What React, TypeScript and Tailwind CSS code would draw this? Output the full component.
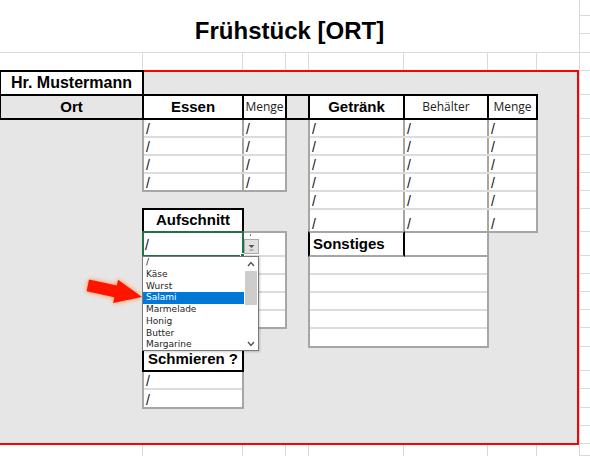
import React from 'react';

// row heights of the sheet, top to bottom (used for the gridline column on the right)
const rowH = [
  'h-[16px]', 'h-[18px]', 'h-[19px]', 'h-[18px]', 'h-[24px]', 'h-[24px]', 'h-[18px]', 'h-[18px]',
  'h-[18px]', 'h-[18px]', 'h-[18px]', 'h-[23px]', 'h-[24px]', 'h-[18px]', 'h-[18px]', 'h-[18px]',
  'h-[18px]', 'h-[19px]', 'h-[24px]', 'h-[18px]', 'h-[19px]', 'h-[18px]', 'h-[18px]', 'h-[12px]',
];
const colW = ['w-[143px]', 'w-[100px]', 'w-[43px]', 'w-[23px]', 'w-[95px]', 'w-[84px]', 'w-[49px]', 'w-[42px]'];

const items = ['/', 'Käse', 'Wurst', 'Salami', 'Marmelade', 'Honig', 'Butter', 'Margarine'];

const arrow = '89,279.5 116.8,285.5 118.1,279.7 142,297 113.1,303.1 114.4,297.3 86.6,291.2';

function GridStrip({ className }: { className: string }) {
  return (
    <div className={`${className} flex`}>
      {colW.map((w, i) => (
        <div key={i} className={`${w} shrink-0 border-r border-[#dadada] last:border-r-0`} />
      ))}
    </div>
  );
}

function DataGrid({
  area,
  rows,
  cols,
  filled,
}: {
  area: string;
  rows: string[];
  cols: string[];
  filled: boolean[];
}) {
  return (
    <div className={`${area} -m-px flex flex-col divide-y-2 divide-[#dcdcdc] border-2 border-[#a6a6a6] bg-white`}>
      {rows.map((h, r) => (
        <div key={r} className={`${h} flex shrink-0 divide-x-2 divide-[#a6a6a6]`}>
          {cols.map((w, c) => (
            <div key={c} className={`${w} flex shrink-0 items-end pl-[2px] text-[14px] leading-[14px] text-[#111]`}>
              {filled[c] ? '/' : ''}
            </div>
          ))}
        </div>
      ))}
    </div>
  );
}

export default function App() {
  return (
    <div className="relative h-[456px] w-[590px] overflow-hidden bg-white font-['Liberation_Sans',Arial,sans-serif] text-black">
      <div className="grid h-full w-full grid-cols-[143px_100px_43px_23px_95px_84px_49px_42px_11px] grid-rows-[16px_18px_19px_18px_24px_24px_18px_18px_18px_18px_18px_23px_24px_18px_18px_18px_18px_19px_24px_18px_19px_18px_18px_12px]">
        {/* title (merged cell) */}
        <div className="col-start-1 col-end-9 row-start-1 row-end-4 flex items-center justify-center border-b border-[#dadada] pt-[9px] text-[24px] font-bold">
          Frühstück [ORT]
        </div>

        {/* plain sheet gridlines */}
        <GridStrip className="col-start-1 col-end-9 row-start-4" />
        <GridStrip className="col-start-1 col-end-9 row-start-24" />
        <div className="col-start-9 row-start-1 row-end-25 flex flex-col border-l border-[#dadada]">
          {rowH.map((h, i) => (
            <div key={i} className={`${h} shrink-0 border-b border-[#dadada]`} />
          ))}
        </div>

        {/* grey print area with red frame */}
        <div className="col-start-1 col-end-9 row-start-5 row-end-24 -mt-px -mb-px border-t-2 border-r-2 border-b-2 border-[#ff0000] bg-[#e7e6e6]" />

        <div className="col-start-1 row-start-5 -m-px flex items-center justify-center border-2 border-black bg-white text-[16px] font-bold">
          Hr. Mustermann
        </div>

        {/* data blocks */}
        <DataGrid
          area="col-start-2 col-end-4 row-start-7 row-end-11"
          rows={['h-[18px]', 'h-[18px]', 'h-[18px]', 'h-[16px]']}
          cols={['w-[100px]', 'flex-1']}
          filled={[true, true]}
        />
        <DataGrid
          area="col-start-5 col-end-8 row-start-7 row-end-13"
          rows={['h-[18px]', 'h-[18px]', 'h-[18px]', 'h-[18px]', 'h-[18px]', 'h-[21px]']}
          cols={['w-[95px]', 'w-[84px]', 'flex-1']}
          filled={[true, true, true]}
        />
        <DataGrid
          area="col-start-2 col-end-4 row-start-13 row-end-18"
          rows={['h-[24px]', 'h-[18px]', 'h-[18px]', 'h-[18px]', 'h-[16px]']}
          cols={['w-[100px]', 'flex-1']}
          filled={[false, false]}
        />
        <DataGrid
          area="col-start-5 col-end-7 row-start-14 row-end-19"
          rows={['h-[18px]', 'h-[18px]', 'h-[18px]', 'h-[18px]', 'h-[17px]']}
          cols={['flex-1']}
          filled={[false]}
        />
        <DataGrid
          area="col-start-2 row-start-20 row-end-22"
          rows={['h-[18px]', 'h-[17px]']}
          cols={['flex-1']}
          filled={[true]}
        />

        {/* header row */}
        <div className="col-start-1 col-end-8 row-start-6 -m-px flex divide-x-2 divide-black border-2 border-black text-[15px] font-bold">
          <div className="flex w-[143px] shrink-0 items-center justify-center bg-[#e7e6e6]">Ort</div>
          <div className="flex w-[100px] shrink-0 items-center justify-center bg-white">Essen</div>
          <div className="flex w-[43px] shrink-0 items-center justify-center bg-white font-['Open_Sans',sans-serif] text-[12px] font-normal text-[#222]">
            Menge
          </div>
          <div className="w-[23px] shrink-0 bg-[#e7e6e6]" />
          <div className="flex w-[95px] shrink-0 items-center justify-center bg-white">Getränk</div>
          <div className="flex w-[84px] shrink-0 items-center justify-center bg-white font-['Open_Sans',sans-serif] text-[12px] font-normal text-[#222]">
            Behälter
          </div>
          <div className="flex flex-1 items-center justify-center bg-white font-['Open_Sans',sans-serif] text-[12px] font-normal text-[#222]">
            Menge
          </div>
        </div>

        <div className="col-start-2 row-start-12 -m-px flex items-center justify-center border-2 border-black bg-white text-[15px] font-bold">
          Aufschnitt
        </div>

        {/* active cell */}
        <div className="relative col-start-2 row-start-13 -m-px flex items-end border-2 border-[#217346] pb-[3px] pl-[1px] text-[14px] leading-[14px] text-[#111]">
          /
          <span className="absolute -right-[3px] -bottom-[3px] h-[5px] w-[5px] border border-white bg-[#217346]" />
        </div>

        <div className="col-start-6 row-start-13 -m-px border-2 border-[#a6a6a6] bg-white" />
        <div className="col-start-5 row-start-13 -m-px flex items-center border-2 border-x-black border-y-[#a6a6a6] bg-white pl-[3px] text-[15px] font-bold">
          Sonstiges
        </div>

        <div className="col-start-2 row-start-19 -m-px flex items-center justify-center border-2 border-black bg-white text-[15px] font-bold">
          Schmieren ?
        </div>
      </div>

      {/* validation dropdown button */}
      <div className="absolute top-[234px] left-[250px] h-[2px] w-px bg-[#777]" />
      <div className="absolute top-[239px] left-[244px] flex h-[15px] w-[15px] items-center justify-center border border-[#a9a9a9] bg-[#e1e1e1]">
        <svg width="9" height="9" viewBox="0 0 9 9">
          <polygon points="1.5,3 7.5,3 4.5,6" fill="#555" />
          <line x1="2.5" y1="8" x2="6.5" y2="8" stroke="#888" strokeWidth="1" />
        </svg>
      </div>

      {/* dropdown list */}
      <div className="absolute top-[256px] left-[142px] flex h-[95px] w-[117px] border border-[#7a7a7a] bg-white font-['DejaVu_Sans',sans-serif] text-[9px] text-[#1e1e1e] shadow-[1px_1px_2px_rgba(0,0,0,0.2)]">
        <ul className="flex-1 overflow-hidden">
          {items.map((it) => (
            <li
              key={it}
              className={
                it === 'Salami'
                  ? 'h-[11.75px] bg-[#0078d7] pl-[3px] leading-[11.75px] text-white'
                  : 'h-[11.75px] pl-[3px] leading-[11.75px]'
              }
            >
              {it}
            </li>
          ))}
        </ul>
        <div className="flex w-[14px] flex-col items-center">
          <div className="flex h-[14px] items-center justify-center">
            <svg width="8" height="6" viewBox="0 0 8 6">
              <polyline points="1,5 4,1.5 7,5" fill="none" stroke="#555" strokeWidth="1.4" />
            </svg>
          </div>
          <div className="h-[34px] w-[12px] bg-[#cdcdcd]" />
          <div className="flex-1" />
          <div className="flex h-[12px] items-center justify-center">
            <svg width="8" height="6" viewBox="0 0 8 6">
              <polyline points="1,1 4,4.5 7,1" fill="none" stroke="#555" strokeWidth="1.4" />
            </svg>
          </div>
        </div>
      </div>

      {/* red pointer arrow */}
      <svg className="absolute top-[268px] left-[76px]" width="74" height="44" viewBox="76 268 74 44">
        <defs>
          <filter id="glow" x="-30%" y="-50%" width="160%" height="200%">
            <feGaussianBlur stdDeviation="2.6" />
          </filter>
        </defs>
        <polygon points={arrow} fill="#ff7a20" opacity="0.9" filter="url(#glow)" />
        <polygon points={arrow} fill="#ff1400" />
      </svg>
    </div>
  );
}
